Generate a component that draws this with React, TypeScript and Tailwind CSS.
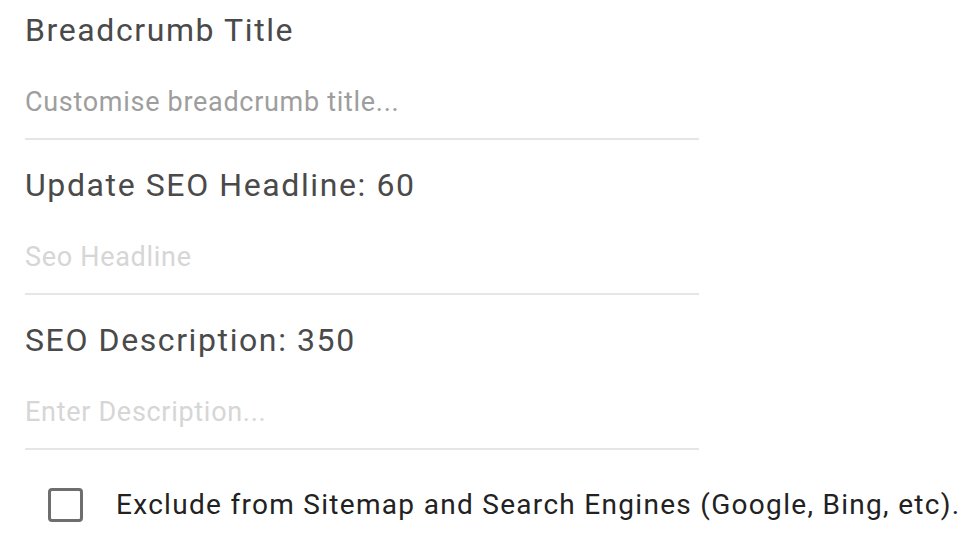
import { useState } from 'react';

const fields = [
  { label: 'Breadcrumb Title', placeholder: 'Customise breadcrumb title...', tone: 'placeholder:text-[#9e9e9e]' },
  { label: 'Update SEO Headline: 60', placeholder: 'Seo Headline', tone: 'placeholder:text-[#d6d6d6]' },
  { label: 'SEO Description: 350', placeholder: 'Enter Description...', tone: 'placeholder:text-[#d6d6d6]' },
];

const App = () => {
  const [values, setValues] = useState(['', '', '']);
  const [excluded, setExcluded] = useState(false);

  return (
    <div className="min-h-screen bg-white font-['Roboto',sans-serif]">
      <div className="w-[674px] ml-[25px] pt-[10px] flex flex-col gap-[25px]">
        {fields.map((f, i) => (
          <div key={f.label} className="flex flex-col">
            <label className="text-[32px] leading-[40px] tracking-[1.6px] text-[#4a4a4a]">
              {f.label}
            </label>
            <input
              type="text"
              value={values[i]}
              placeholder={f.placeholder}
              onChange={(e) => setValues(values.map((v, j) => (j === i ? e.target.value : v)))}
              className={`mt-[36px] pb-[20px] text-[27px] leading-[32px] tracking-[0.7px] text-[#4a4a4a] outline-none border-b-2 border-[#e6e6e6] ${f.tone}`}
            />
          </div>
        ))}
        <label className="flex items-center gap-[33px] ml-[23px] mt-[13px] cursor-pointer w-[940px]">
          <input
            type="checkbox"
            checked={excluded}
            onChange={(e) => setExcluded(e.target.checked)}
            className="appearance-none w-[35px] h-[34px] border-[3px] border-[#6e6e6e] rounded-[4px] shrink-0 checked:bg-[#6e6e6e]"
          />
          <span className="text-[28px] leading-[32px] tracking-[1.3px] text-[#222] whitespace-nowrap">
            Exclude from Sitemap and Search Engines (Google, Bing, etc).
          </span>
        </label>
      </div>
    </div>
  );
};

export default App;
